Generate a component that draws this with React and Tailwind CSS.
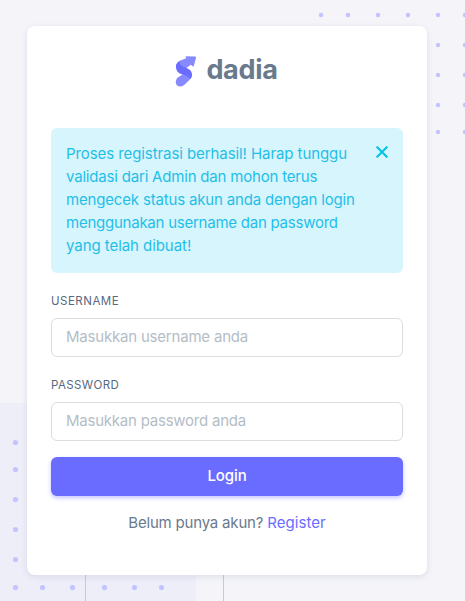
const dots = [
  [321, 15], [348, 15], [378, 15], [408, 15], [438, 15], [465, 15],
  [438, 45], [438, 75], [438, 105], [438, 132],
  [465, 45], [465, 75], [465, 105], [465, 132],
  [15.5, 442.5], [15.5, 469.5], [15.5, 499.5], [15.5, 529.5], [15.5, 559.5],
  [15.5, 587.5], [42.5, 587.5], [72.5, 587.5], [104.5, 587.5], [134.5, 587.5], [161.5, 587.5],
];

function Backdrop() {
  return (
    <svg className="absolute inset-0" width="465" height="601" viewBox="0 0 465 601" aria-hidden="true">
      <rect x="0" y="403" width="196" height="198" fill="#eeeef9" />
      <path d="M85.5 560V601M223.5 560V601" stroke="#c8c9d3" />
      {dots.map(([x, y]) => (
        <circle key={`${x}-${y}`} cx={x} cy={y} r={y > 400 ? 2.6 : 2.2} fill="#c3c4ff" />
      ))}
    </svg>
  );
}

function Logo() {
  return (
    <svg width="22" height="32" viewBox="0 0 22 32" aria-hidden="true">
      <path d="M10.5 1.2L20 1.5Q21.4 1.7 21 3L18.8 10.8Q18.2 12 17.2 10.9L15.8 9.7L9 14.5L1 13Q0 8.5 4.8 5.8L11.2 3.2Z" fill="#8789ff" />
      <path d="M1.1 25.3Q1.3 23.2 4 21.8L9.5 18.2L17 20.5Q15.8 24.5 8.8 30.2Q5 32.8 1.8 30.2Q.2 28 1.1 25.3Z" fill="#8789ff" />
      <path d="M4.8 5.8Q3.8 9.4 7.5 11.3L12.6 13.4Q17.5 15.8 17 20.5Q16.6 22.6 15.2 24.3Q14.5 22 8.3 19.8L4.8 18.4Q1.2 16.5 1 12.2Q.8 8.6 4.8 5.8Z" fill="#696cff" />
    </svg>
  );
}

function Field({ label, type, placeholder, labelClass, inputClass }) {
  return (
    <label className="block h-[68px]">
      <span className={`block h-[26px] text-[11.5px] leading-[18px] text-[#566a7f] ${labelClass}`}>{label}</span>
      <input
        type={type}
        placeholder={placeholder}
        className={`block h-[39px] w-full rounded-md border border-[#d9dee3] bg-white px-3.5 pb-0.5 text-[15px] text-[#697a8d] outline-none placeholder:text-[#b4bdc6] ${inputClass}`}
      />
    </label>
  );
}

export default function App() {
  return (
    <div className="relative h-[601px] w-[465px] overflow-hidden bg-[#f4f4f9] pt-[26px] pl-[27px] font-['Inter','Liberation_Sans',sans-serif]">
      <Backdrop />
      <main className="relative h-[549px] w-[400px] rounded-lg bg-white px-6 pt-[29px] shadow-[0_2px_6px_0_rgba(67,89,113,0.12)]">
        <div className="flex h-[73px] items-start justify-center gap-[9px] pr-px">
          <Logo />
          <span className="text-[27px] leading-[29px] font-bold tracking-[-0.3px] text-[#697a8d]">dadia</span>
        </div>
        <div className="flex h-[145px] justify-between rounded-md bg-[#d7f5fc] pt-[14px] pr-[15px] pl-[15px] text-[#1fbfe9]">
          <p className="text-[15px] leading-[23px] whitespace-nowrap">
            <span className="block tracking-[-0.08px]">Proses registrasi berhasil! Harap tunggu</span>
            <span className="block tracking-[-0.19px]">validasi dari Admin dan mohon terus</span>
            <span className="block tracking-[-0.17px]">mengecek status akun anda dengan login</span>
            <span className="block tracking-[-0.24px]">menggunakan username dan password</span>
            <span className="block tracking-[-0.06px]">yang telah dibuat!</span>
          </p>
          <button type="button" aria-label="Tutup" className="h-3 w-3 text-[#03c3ec]">
            <svg className="mt-1" width="12" height="12" viewBox="0 0 12 12">
              <path d="M.6 .6L11.4 11.4M11.4 .6L.6 11.4" stroke="currentColor" strokeWidth="2.1" />
            </svg>
          </button>
        </div>
        <form className="mt-[19px]" onSubmit={(e) => e.preventDefault()}>
          <Field label="USERNAME" type="text" placeholder="Masukkan username anda" labelClass="tracking-[0.5px]" inputClass="tracking-[-0.2px]" />
          <div className="h-4" />
          <Field label="PASSWORD" type="password" placeholder="Masukkan password anda" labelClass="tracking-[0.4px]" inputClass="tracking-[-0.23px]" />
          <button type="submit" className="mt-[13px] block h-[39px] w-full rounded-md bg-[#696cff] pb-px text-[15px] leading-[24px] font-medium tracking-[-0.1px] text-white shadow-[0_2px_4px_0_rgba(105,108,255,0.4)]">
            Login
          </button>
        </form>
        <p className="mt-[15px] text-center text-[15px] leading-[23px] tracking-[-0.19px] whitespace-nowrap text-[#697a8d]">
          Belum punya akun? <a href="#register" className="tracking-[0.05px] text-[#696cff]">Register</a>
        </p>
      </main>
    </div>
  );
}
